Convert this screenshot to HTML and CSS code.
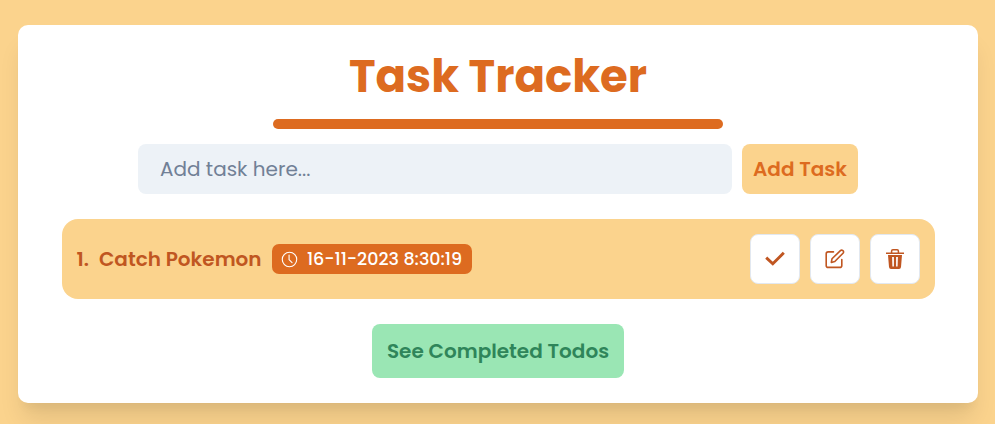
FILE: index.html
```html
<!DOCTYPE html>
<html lang="en">
<head>
<meta charset="utf-8">
<title>Task Tracker</title>
<link rel="stylesheet" href="styles.css">
</head>
<body>
<main class="card">
  <h1 class="title">Task Tracker</h1>
  <div class="rule"></div>
  <form class="add-form">
    <input class="task-input" type="text" placeholder="Add task here...">
    <button class="add-button" type="button">Add Task</button>
  </form>
  <section class="task">
    <span class="number">1.</span>
    <span class="name">Catch Pokemon</span>
    <span class="stamp">
      <svg class="clock" viewBox="0 0 16 16" fill="none" stroke="currentColor" stroke-width="1.05" stroke-linecap="round" stroke-linejoin="round"><circle cx="8" cy="8" r="6.8"/><path d="M7.6 3.8V8.2l2.8 2.7"/></svg>
      <span class="date">16-11-2023 8:30:19</span>
    </span>
    <div class="actions">
      <button class="icon-button" type="button" aria-label="Complete"><svg width="20" height="20" viewBox="0 0 20 20" fill="none" stroke="currentColor" stroke-width="2.9"><path d="M1.2 8.6 7.8 14.8 18.8 3.8"/></svg></button>
      <button class="icon-button" type="button" aria-label="Edit"><svg width="20" height="20" viewBox="0 0 20 20" fill="none" stroke="currentColor" stroke-width="1.6" stroke-linecap="round" stroke-linejoin="round"><path d="M8.5 2.9H3.2Q1.2 2.9 1.2 4.9v11.5q0 2 2 2h11.6q2 0 2-2V10.500"/><path d="M6.300 13.400l.7-3.600 8.400-8.200q1.200-1 2.500.1t.1 2.500L9.800 12.500z"/></svg></button>
      <button class="icon-button" type="button" aria-label="Delete"><svg width="20" height="22" viewBox="0 0 20 22" fill="none" stroke="currentColor"><path stroke-width="1.5" d="M1 5.2h18M6.6 5V3.1q0-1.3 1.300-1.300h4.200q1.300 0 1.300 1.300V5"/><path fill="currentColor" stroke="none" fill-rule="evenodd" d="M3 7h14l-1 12q-.2 2-2 2H6q-1.800 0-2-2zM7.100 9l.3 9.500h1.500V9zM11.100 9v9.500h1.500l.3-9.500z"/></svg></button>
    </div>
  </section>
  <button class="completed" type="button">See Completed Todos</button>
</main>
</body>
</html>
```
FILE: styles.css
```css
* { box-sizing: border-box; }
body {
  margin: 0;
  height: 424px;
  padding: 25px 17px 0 18px;
  overflow: hidden;
  background: #fbd38d;
  font-family: Poppins, Inter, sans-serif;
}
button, input { font: inherit; border: 0; padding: 0; margin: 0; }
.card {
  height: 378px;
  padding: 25px 44px 0;
  display: flex;
  flex-direction: column;
  align-items: center;
  background: #fff;
  border-radius: 10px;
  box-shadow: 0 20px 25px -5px rgba(0, 0, 0, .1), 0 10px 10px -5px rgba(0, 0, 0, .04);
}
.title {
  margin: 0;
  height: 69px;
  line-height: 54px;
  font-size: 45px;
  font-weight: 700;
  white-space: nowrap;
  color: #dd6b20;
}
.rule { width: 450px; height: 10px; border-radius: 5px; background: #dd6b20; }
.add-form { display: flex; gap: 10px; margin-top: 15px; }
.task-input {
  width: 594px;
  height: 50px;
  padding: 0 22px;
  border-radius: 8px;
  background: #edf2f7;
  font-size: 20px;
}
.task-input::placeholder { color: #718096; opacity: 1; }
.add-button {
  width: 116px;
  height: 50px;
  border-radius: 8px;
  background: #fbd38d;
  color: #dd6b20;
  font-size: 20px;
  font-weight: 600;
  white-space: nowrap;
}
.task {
  align-self: stretch;
  height: 80px;
  margin: 25px -1px 0 0;
  padding: 0 15px 0 14.5px;
  display: flex;
  align-items: center;
  border-radius: 16px;
  background: #fbd38d;
  color: #c05621;
  font-size: 20px;
  font-weight: 600;
  white-space: nowrap;
}
.number { width: 22.5px; }
.name { width: 173px; }
.stamp {
  width: 200px;
  height: 30px;
  padding-left: 9px;
  display: flex;
  align-items: center;
  border-radius: 7px;
  background: #dd6b20;
  color: #fff;
  font-size: 17.5px;
  font-weight: 500;
}
.clock { width: 17px; height: 17px; margin-right: 9px; }
.actions { display: flex; gap: 10px; margin-left: auto; }
.icon-button {
  width: 50px;
  height: 50px;
  display: flex;
  align-items: center;
  justify-content: center;
  border: 1px solid #e2e8f0;
  border-radius: 8px;
  background: #fff;
  color: #c05621;
}
.completed {
  width: 252px;
  height: 54px;
  margin-top: 25px;
  border-radius: 8px;
  background: #9ae6b4;
  color: #2f855a;
  font-size: 20px;
  font-weight: 600;
  white-space: nowrap;
}
```
